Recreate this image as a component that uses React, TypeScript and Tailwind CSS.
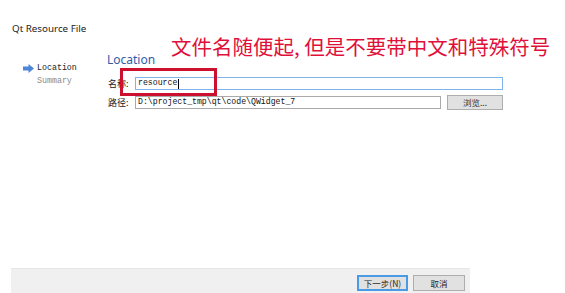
import React from "react";

const ArrowIcon = () => (
  <svg width="11" height="9" viewBox="0 0 11 9" className="mr-[3px]">
    <path d="M0 2.5 H5.5 V0 L11 4.5 L5.5 9 V6.5 H0 Z" fill="#4f86d8" />
  </svg>
);

const App: React.FC = () => {
  return (
    <div className="relative w-[565px] h-[293px] bg-white flex flex-col overflow-hidden font-['Noto_Sans','Noto_Sans_CJK_SC',sans-serif]">
      {/* Window title */}
      <div className="pl-[12px] pt-[22px] text-[9.8px] leading-[13px] text-[#222]">Qt Resource File</div>

      <div className="flex mt-[18px]">
        {/* Steps */}
        <div className="w-[107px] pl-[23px] pt-[9px] font-['Liberation_Mono',monospace] text-[8.3px] leading-[12px]">
          <div className="flex items-center text-[#222]">
            <ArrowIcon />
            Location
          </div>
          <div className="pl-[14px] mt-[1px] text-[#8a8a8a]">Summary</div>
        </div>

        {/* Page */}
        <div className="flex flex-col">
          <div className="text-[12px] leading-[14px] text-[#2f5ea8]">Location</div>

          <div className="flex items-center h-[15px] mt-[9px]">
            <span className="w-[28px] pl-[1px] text-[9px] text-[#222] font-['Noto_Sans_CJK_SC',sans-serif]">名称:</span>
            <div className="w-[368px] h-[13px] border border-[#7eb4ea] bg-white flex items-center pl-[2px] font-['Liberation_Mono',monospace] text-[8.2px] text-[#111]">
              resource
              <span className="inline-block w-px h-[10px] bg-black ml-px" />
            </div>
          </div>

          <div className="flex items-center h-[15px] mt-[4px]">
            <span className="w-[28px] pl-[1px] text-[9px] text-[#222] font-['Noto_Sans_CJK_SC',sans-serif]">路径:</span>
            <div className="w-[306px] h-[13px] border border-[#a9a9a9] bg-white flex items-center pl-[2px] font-['Liberation_Mono',monospace] text-[8.2px] text-[#111]">
              D:\project_tmp\qt\code\QWidget_7
            </div>
            <button className="ml-[6px] w-[56px] h-[15px] border border-[#adadad] bg-[#e1e1e1] text-[8.5px] leading-none text-[#333] font-['Noto_Sans_CJK_SC',sans-serif]">
              浏览...
            </button>
          </div>
        </div>
      </div>

      <div className="flex-1" />

      {/* Bottom button bar */}
      <div className="ml-[11px] w-[459px] h-[25px] bg-[#f0f0f0] border-t border-[#e6e6e6] flex justify-end items-start pt-[6px] pr-[5px] gap-[5px]">
        <button className="w-[51px] h-[16px] border-2 border-[#4a9ae6] bg-[#e1e1e1] text-[8.5px] leading-none text-[#222] font-['Noto_Sans_CJK_SC',sans-serif]">
          下一步(N)
        </button>
        <button className="w-[52px] h-[16px] border border-[#adadad] bg-[#e1e1e1] text-[8.5px] leading-none text-[#222] font-['Noto_Sans_CJK_SC',sans-serif]">
          取消
        </button>
      </div>

      {/* Annotation overlay */}
      <div className="absolute left-[171px] top-[34px] text-[20.5px] leading-[24px] text-[#e0103a] whitespace-nowrap font-['Noto_Sans_CJK_SC',sans-serif]">
        文件名随便起, 但是不要带中文和特殊符号
      </div>
      <div className="absolute left-[120px] top-[68px] w-[97px] h-[28px] border-[3px] border-[#cc1030]" />
    </div>
  );
};

export default App;
